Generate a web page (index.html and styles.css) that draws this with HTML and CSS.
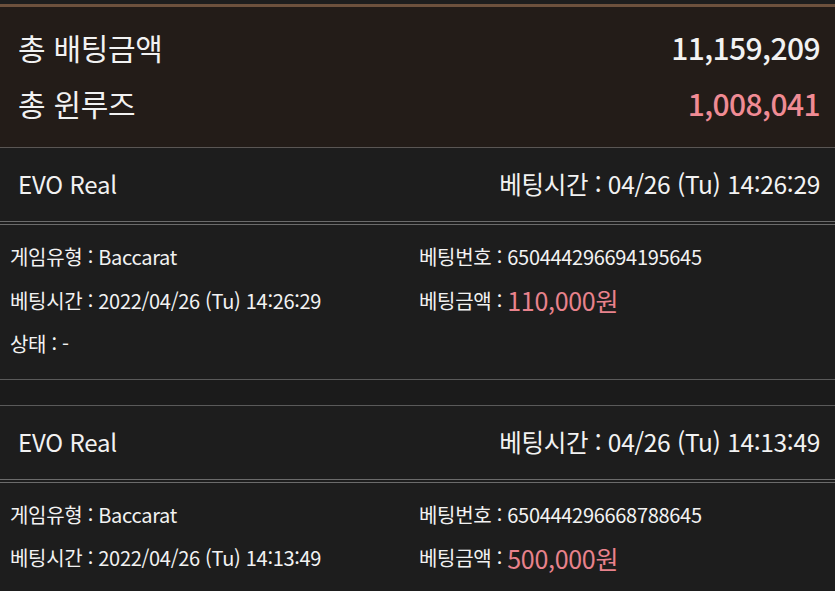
FILE: index.html
```html
<!DOCTYPE html>
<html lang="ko">
<head>
<meta charset="utf-8">
<link rel="stylesheet" href="styles.css">
</head>
<body>
<div class="top-strip"></div>
<section class="summary">
  <div class="sum-row"><span class="sum-label">총 배팅금액</span><span class="sum-value">11,159,209</span></div>
  <div class="sum-row"><span class="sum-label">총 윈루즈</span><span class="sum-value pink">1,008,041</span></div>
</section>
<section class="card">
  <div class="card-head"><span class="game">EVO Real</span><span class="time">베팅시간 : 04/26 (Tu) 14:26:29</span></div>
  <div class="card-body">
    <div class="cell">게임유형 : Baccarat</div>
    <div class="cell">베팅번호 : 650444296694195645</div>
    <div class="cell">베팅시간 : 2022/04/26 (Tu) 14:26:29</div>
    <div class="cell">베팅금액 : <span class="amount">110,000원</span></div>
    <div class="cell">상태 : -</div>
  </div>
</section>
<div class="gap"></div>
<section class="card">
  <div class="card-head"><span class="game">EVO Real</span><span class="time">베팅시간 : 04/26 (Tu) 14:13:49</span></div>
  <div class="card-body">
    <div class="cell">게임유형 : Baccarat</div>
    <div class="cell">베팅번호 : 650444296668788645</div>
    <div class="cell">베팅시간 : 2022/04/26 (Tu) 14:13:49</div>
    <div class="cell">베팅금액 : <span class="amount">500,000원</span></div>
  </div>
</section>
</body>
</html>
```
FILE: styles.css
```css
html, body {
  margin: 0;
  padding: 0;
  background: #1c1c1c;
  color: #f2f2f2;
  font-family: "Noto Sans CJK KR", "Noto Sans", sans-serif;
  overflow: hidden;
}
.top-strip {
  height: 4px;
  background: #1e1e1e;
  border-bottom: 3px solid #6d513d;
}
.summary {
  background: #231c18;
  padding: 12px 15px 16px 18px;
  border-bottom: 1px solid #5a5654;
}
.sum-row {
  height: 56px;
  display: flex;
  align-items: center;
  justify-content: space-between;
}
.sum-label {
  font-size: 30px;
  letter-spacing: -0.3px;
}
.sum-value {
  font-size: 30px;
  font-weight: 500;
  letter-spacing: -0.6px;
}
.pink { color: #f08b94; }
.card {
  background: #1d1d1d;
}
.card-head {
  height: 73px;
  display: flex;
  align-items: center;
  justify-content: space-between;
  padding: 0 15px 0 18px;
  border-bottom: 4px double #6b6b6b;
}
.game {
  font-size: 24px;
  letter-spacing: -0.2px;
  margin-top: -2px;
}
.time {
  font-size: 24.5px;
  letter-spacing: -0.3px;
  margin-top: -2px;
}
.card-body {
  display: grid;
  grid-template-columns: 409px 1fr;
  grid-auto-rows: 43.5px;
  padding: 10px 0 13px 10px;
  border-bottom: 1px solid #5a5a5a;
}
.cell {
  display: flex;
  align-items: center;
  font-size: 20px;
  letter-spacing: -0.3px;
  white-space: pre;
}
.amount {
  font-size: 25px;
  color: #e8828c;
  letter-spacing: -0.3px;
}
.gap {
  height: 25px;
  background: #1b1b1b;
  border-bottom: 1px solid #5a5a5a;
}
```
